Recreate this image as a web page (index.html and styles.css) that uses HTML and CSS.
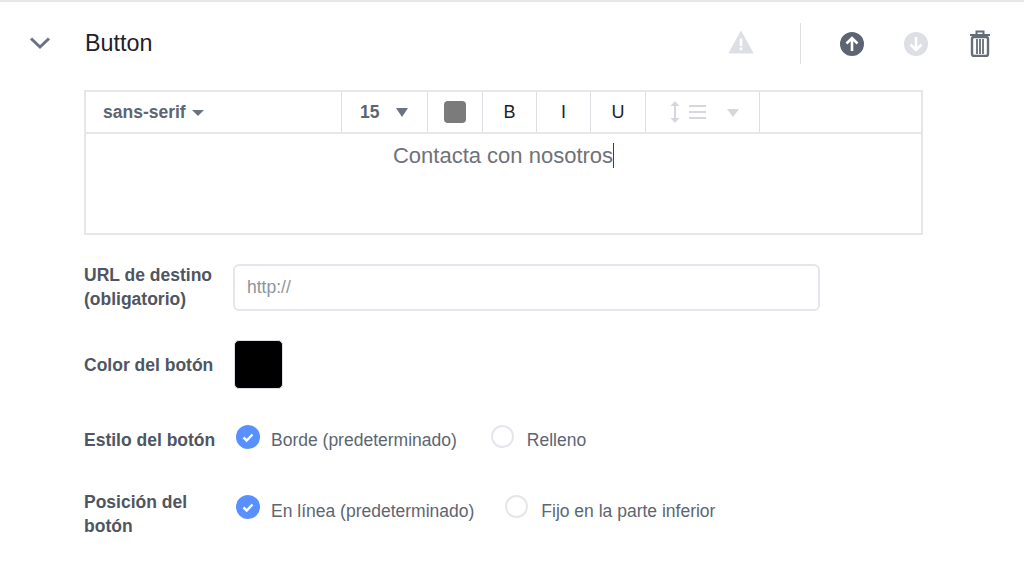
FILE: index.html
```html
<!DOCTYPE html>
<html lang="es">
<head>
<meta charset="utf-8">
<title>Button</title>
<link rel="stylesheet" href="styles.css">
</head>
<body>
<div class="panel">
  <header class="head">
    <svg class="chev" width="22" height="14" viewBox="0 0 22 14"><path d="M2 2.500 11 11 20 2.500" fill="none" stroke="#6b7280" stroke-width="3"/></svg>
    <h1 class="title">Button</h1>
    <div class="actions">
      <svg class="ic-warn" width="26" height="24" viewBox="0 0 26 24"><path d="M13 1.500 25 23H1Z" fill="#dddfe4" stroke="#dddfe4" stroke-linejoin="round"/><rect x="11.700" y="8.500" width="2.600" height="7.500" fill="#fff"/><rect x="11.700" y="17.500" width="2.600" height="2.800" fill="#fff"/></svg>
      <span class="divider"></span>
      <svg class="ic-up" width="24" height="24" viewBox="0 0 24 24"><circle cx="12" cy="12" r="12" fill="#5d6572"/><path d="M12 19V6M6.500 11.500 12 6l5.500 5.500" fill="none" stroke="#fff" stroke-width="2.600"/></svg>
      <svg class="ic-down" width="24" height="24" viewBox="0 0 24 24"><circle cx="12" cy="12" r="12" fill="#dddfe4"/><path d="M12 5v13M6.500 12.500 12 18l5.500-5.500" fill="none" stroke="#fff" stroke-width="2.600"/></svg>
      <svg class="ic-trash" width="22" height="28" viewBox="0 0 22 28"><path d="M1 6h20M7.500 5V2.500h7V5" fill="none" stroke="#656d7a" stroke-width="2"/><rect x="3" y="8" width="16" height="19" rx="2" fill="none" stroke="#656d7a" stroke-width="2.400"/><path d="M8 10v15M11 10v15M14 10v15" stroke="#656d7a" stroke-width="1.800"/></svg>
    </div>
  </header>

  <section class="editor">
    <div class="toolbar">
      <div class="cell cell-font"><span>sans-serif</span><i class="tri"></i></div>
      <div class="cell cell-size"><span>15</span><i class="tri tri-lg"></i></div>
      <div class="cell cell-color"><i class="color-chip"></i></div>
      <div class="cell cell-style">B</div>
      <div class="cell cell-style">I</div>
      <div class="cell cell-style cell-u">U</div>
      <div class="cell cell-spacing">
        <svg width="12" height="24" viewBox="0 0 12 24"><path d="M6 3v18" stroke="#d5d7dc" stroke-width="2"/><path d="M1.500 6 6 1l4.500 5ZM1.500 18 6 23l4.500-5Z" fill="#d5d7dc"/></svg>
        <svg width="18" height="16" viewBox="0 0 18 16"><path d="M0 2h17M0 8h17M0 14h17" stroke="#d5d7dc" stroke-width="2.200"/></svg>
        <i class="tri tri-lg tri-off"></i>
      </div>
    </div>
    <div class="editor-body"><span class="caret-text">Contacta con nosotros</span></div>
  </section>

  <div class="form">
    <div class="row row-url">
      <label class="label">URL de destino (obligatorio)</label>
      <div class="url-field">http://</div>
    </div>
    <div class="row row-swatch">
      <label class="label">Color del botón</label>
      <div class="swatch"></div>
    </div>
    <div class="row row-style">
      <label class="label">Estilo del botón</label>
      <div class="opts">
        <span class="opt"><svg class="check" width="24" height="24" viewBox="0 0 24 24"><circle cx="12" cy="12" r="12" fill="#5890ff"/><path d="M7.500 12.500 10.700 15.500 16.500 9.500" fill="none" stroke="#fff" stroke-width="2.400"/></svg>Borde (predeterminado)</span>
        <span class="opt"><i class="radio"></i>Relleno</span>
      </div>
    </div>
    <div class="row row-pos">
      <label class="label">Posición del botón</label>
      <div class="opts">
        <span class="opt"><svg class="check" width="24" height="24" viewBox="0 0 24 24"><circle cx="12" cy="12" r="12" fill="#5890ff"/><path d="M7.500 12.500 10.700 15.500 16.500 9.500" fill="none" stroke="#fff" stroke-width="2.400"/></svg>En línea (predeterminado)</span>
        <span class="opt"><i class="radio"></i>Fijo en la parte inferior</span>
      </div>
    </div>
  </div>
</div>
</body>
</html>
```
FILE: styles.css
```css
* { box-sizing: border-box; }
html, body { margin: 0; background: #fff; }
body {
  width: 1024px;
  height: 566px;
  overflow: hidden;
  font-family: "Liberation Sans", Arial, sans-serif;
  color: #4b4f56;
}
.panel { border-top: 2px solid #e6e7eb; padding-top: 20px; }

.head { display: flex; align-items: center; height: 42px; padding-left: 29px; }
.chev { flex: none; }
.title { margin: 0 0 0 34px; font-size: 23.3px; font-weight: 400; color: #1d2129; }
.actions { margin-left: auto; display: flex; align-items: center; padding-right: 33px; }
.ic-warn { margin-right: 46px; margin-top: -3px; }
.divider { width: 1px; height: 41px; background: #dddfe4; margin-right: 39px; }
.ic-up { margin: 2px 40px 0 0; flex: none; }
.ic-down { margin: 2px 42px 0 0; flex: none; }
.ic-trash { margin-left: -1px; }

.editor { margin: 26px 0 0 84px; width: 839px; height: 145px; border: 2px solid #e6e7eb; }
.toolbar { display: flex; height: 42px; border-bottom: 2px solid #e6e7eb; }
.cell { display: flex; align-items: center; justify-content: center; border-right: 1px solid #dddfe4; color: #1d2129; font-size: 18px; }
.cell-font { width: 256px; justify-content: flex-start; padding-left: 17px; gap: 6px; font-size: 17.5px; font-weight: 700; color: #5d6572; }
.cell-size { width: 86px; justify-content: flex-start; padding-left: 18px; gap: 17px; font-size: 17.5px; font-weight: 700; color: #5d6572; }
.cell-color { width: 55px; }
.cell-style { width: 54px; padding-top: 1px; }
.cell-u { width: 55px; }
.cell-spacing { width: 114px; justify-content: flex-start; padding-left: 23px; gap: 8px; }
.tri { width: 0; height: 0; margin-top: 1px; border-left: 6.5px solid transparent; border-right: 6.5px solid transparent; border-top: 6px solid #6b7280; }
.tri-lg { border-top-width: 9px; }
.tri-off { border-top-color: #d5d7dc; border-top-width: 8px; margin-left: 12px; }
.color-chip { width: 22px; height: 22px; border-radius: 4px; background: #7b7b7b; }
.editor-body { padding-top: 7px; text-align: center; font-size: 22px; line-height: 29px; color: #6f7278; }
.caret-text { border-right: 1px solid #3c4048; }

.form { padding-left: 84px; }
.row { display: flex; }
.label { width: 149px; flex: none; font-size: 17.5px; font-weight: 700; line-height: 24px; color: #4f5662; }
.row-url { margin-top: 28px; align-items: center; }
.url-field { width: 587px; height: 47px; border: 2px solid #e4e6eb; border-radius: 6px; padding-left: 12px; display: flex; align-items: center; font-size: 17.5px; color: #8d949e; }
.row-swatch { margin-top: 29px; align-items: center; }
.swatch { margin-left: 1px; width: 49px; height: 49px; border-radius: 5px; background: #000; border: 1px solid #dddfe4; }
.row-style { margin-top: 39px; }
.row-pos { margin-top: 35px; }
.opts { display: flex; gap: 34px; padding-left: 3px; margin-top: -3px; }
.row-pos .opts { margin-top: 5px; gap: 31px; }
.opt { display: flex; align-items: flex-start; gap: 11px; font-size: 17.5px; line-height: 30px; color: #5d6572; }
.row-pos .opt { line-height: 32px; }
.check { flex: none; }
.radio { width: 23px; height: 23px; margin-right: 2px; border-radius: 50%; border: 2px solid #e4e6eb; flex: none; }
```
